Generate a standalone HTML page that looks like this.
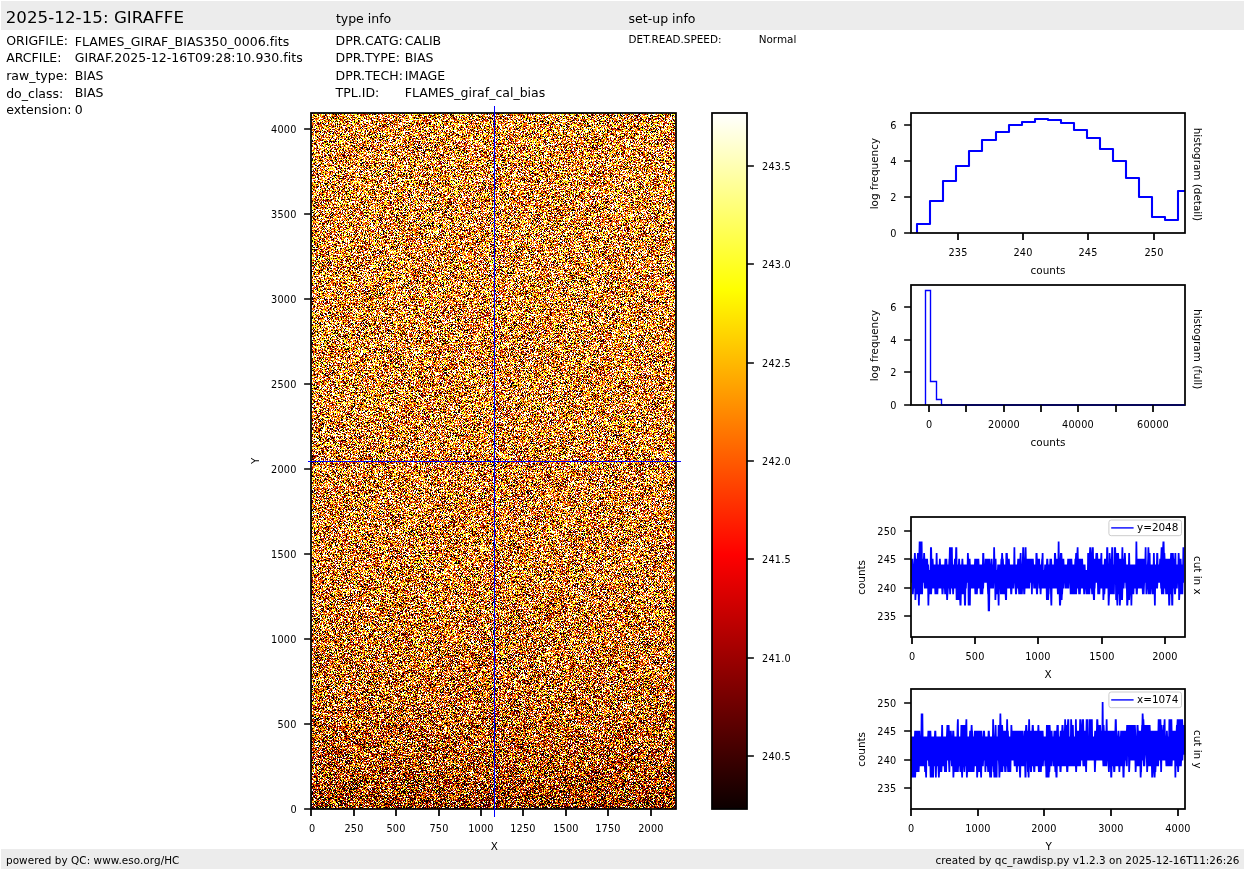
<!DOCTYPE html>
<html lang="en"><head><meta charset="utf-8"><title>2025-12-15: GIRAFFE</title>
<style>html,body{margin:0;padding:0;background:#fff;overflow:hidden}svg{display:block;will-change:transform}text{font-family:'DejaVu Sans','Liberation Sans',sans-serif;fill:#000;white-space:pre}</style></head><body>
<svg width="1245" height="870" viewBox="0 0 1245 870">
<defs>
<filter id="nz" x="0" y="0" width="1" height="1" color-interpolation-filters="sRGB">
<feTurbulence type="fractalNoise" baseFrequency="1.618" numOctaves="1" seed="3" result="t"/>
<feColorMatrix in="t" type="matrix" values="1 0 0 0 0 1 0 0 0 0 1 0 0 0 0 0 0 0 0 1" result="n"/>
<feComposite in="n" in2="SourceGraphic" operator="arithmetic" k1="0" k2="1" k3="0.25" k4="-0.125" result="c"/>
<feComponentTransfer in="c">
<feFuncR type="discrete" tableValues="0.043 0.043 0.043 0.043 0.043 0.043 0.043 0.043 0.043 0.043 0.043 0.043 0.043 0.043 0.043 0.043 0.043 0.043 0.043 0.043 0.043 0.043 0.043 0.043 0.043 0.043 0.043 0.043 0.043 0.043 0.043 0.043 0.043 0.043 0.043 0.043 0.043 0.043 0.043 0.043 0.043 0.043 0.043 0.043 0.043 0.043 0.043 0.043 0.043 0.043 0.043 0.043 0.043 0.043 0.043 0.043 0.043 0.043 0.043 0.043 0.043 0.043 0.043 0.043 0.043 0.043 0.043 0.043 0.043 0.043 0.043 0.043 0.043 0.043 0.043 0.043 0.043 0.043 0.043 0.043 0.043 0.043 0.043 0.043 0.043 0.043 0.043 0.043 0.043 0.043 0.043 0.043 0.043 0.043 0.043 0.043 0.043 0.043 0.043 0.043 0.043 0.043 0.043 0.043 0.043 0.612 0.612 0.612 0.612 0.612 0.612 0.612 0.612 0.612 0.612 0.612 0.612 0.612 0.612 0.612 1 1 1 1 1 1 1 1 1 1 1 1 1 1 1 1 1 1 1 1 1 1 1 1 1 1 1 1 1 1 1 1 1 1 1 1 1 1 1 1 1 1 1 1 1 1 1 1 1 1 1 1 1 1 1 1 1 1 1 1 1 1 1 1 1 1 1 1 1 1 1 1 1 1 1 1 1 1 1 1 1 1 1 1 1 1 1 1 1 1 1 1 1 1 1 1 1 1 1 1 1 1 1 1 1 1 1 1 1 1 1 1 1 1 1 1 1 1 1 1 1 1 1 1 1 1 1 1 1 1 1 1 1 1 1 1"/>
<feFuncG type="discrete" tableValues="0 0 0 0 0 0 0 0 0 0 0 0 0 0 0 0 0 0 0 0 0 0 0 0 0 0 0 0 0 0 0 0 0 0 0 0 0 0 0 0 0 0 0 0 0 0 0 0 0 0 0 0 0 0 0 0 0 0 0 0 0 0 0 0 0 0 0 0 0 0 0 0 0 0 0 0 0 0 0 0 0 0 0 0 0 0 0 0 0 0 0 0 0 0 0 0 0 0 0 0 0 0 0 0 0 0 0 0 0 0 0 0 0 0 0 0 0 0 0 0 0.353 0.353 0.353 0.353 0.353 0.353 0.353 0.353 0.353 0.353 0.353 0.353 0.353 0.353 0.353 0.353 1 1 1 1 1 1 1 1 1 1 1 1 1 1 1 1 1 1 1 1 1 1 1 1 1 1 1 1 1 1 1 1 1 1 1 1 1 1 1 1 1 1 1 1 1 1 1 1 1 1 1 1 1 1 1 1 1 1 1 1 1 1 1 1 1 1 1 1 1 1 1 1 1 1 1 1 1 1 1 1 1 1 1 1 1 1 1 1 1 1 1 1 1 1 1 1 1 1 1 1 1 1 1 1 1 1 1 1 1 1 1 1 1 1 1 1 1 1 1 1"/>
<feFuncB type="discrete" tableValues="0 0 0 0 0 0 0 0 0 0 0 0 0 0 0 0 0 0 0 0 0 0 0 0 0 0 0 0 0 0 0 0 0 0 0 0 0 0 0 0 0 0 0 0 0 0 0 0 0 0 0 0 0 0 0 0 0 0 0 0 0 0 0 0 0 0 0 0 0 0 0 0 0 0 0 0 0 0 0 0 0 0 0 0 0 0 0 0 0 0 0 0 0 0 0 0 0 0 0 0 0 0 0 0 0 0 0 0 0 0 0 0 0 0 0 0 0 0 0 0 0 0 0 0 0 0 0 0 0 0 0 0 0 0 0 0 0.145 0.145 0.145 0.145 0.145 0.145 0.145 0.145 0.145 0.145 0.145 0.145 0.145 0.145 0.145 0.145 1 1 1 1 1 1 1 1 1 1 1 1 1 1 1 1 1 1 1 1 1 1 1 1 1 1 1 1 1 1 1 1 1 1 1 1 1 1 1 1 1 1 1 1 1 1 1 1 1 1 1 1 1 1 1 1 1 1 1 1 1 1 1 1 1 1 1 1 1 1 1 1 1 1 1 1 1 1 1 1 1 1 1 1 1 1 1 1 1 1 1 1 1 1 1 1 1 1 1 1 1 1 1 1"/>
</feComponentTransfer></filter>
<linearGradient id="gm" x1="0" y1="0" x2="0" y2="1">
<stop offset="0" stop-color="rgb(156,156,156)"/>
<stop offset="0.3" stop-color="rgb(152,152,152)"/>
<stop offset="0.67" stop-color="rgb(143,143,143)"/>
<stop offset="0.843" stop-color="rgb(128,128,128)"/>
<stop offset="0.93" stop-color="rgb(108,108,108)"/>
<stop offset="0.965" stop-color="rgb(96,96,96)"/>
<stop offset="1" stop-color="rgb(73,73,73)"/>
</linearGradient>
<linearGradient id="avg" x1="0" y1="0" x2="0" y2="1"><stop offset="0" stop-color="rgb(202,137,71)"/><stop offset="0.7" stop-color="rgb(189,120,59)"/><stop offset="0.95" stop-color="rgb(158,84,37)"/><stop offset="1" stop-color="rgb(145,72,30)"/></linearGradient>
<linearGradient id="hot" x1="0" y1="1" x2="0" y2="0">
<stop offset="0" stop-color="rgb(11,0,0)"/><stop offset="0.365079" stop-color="rgb(255,0,0)"/><stop offset="0.746032" stop-color="rgb(255,255,0)"/><stop offset="1" stop-color="rgb(255,255,255)"/>
</linearGradient>
</defs>
<rect x="1" y="1" width="1243" height="29" fill="#ececec"/>
<rect x="1" y="849" width="1243" height="20" fill="#ececec"/>
<text x="5.70" y="22.90" font-size="16.67" letter-spacing="0.044">2025-12-15: GIRAFFE</text>
<text x="335.90" y="23.00" font-size="12.50">type info</text>
<text x="628.60" y="23.00" font-size="12.50">set-up info</text>
<text x="6.20" y="45.00" font-size="12.50">ORIGFILE:</text>
<text x="74.70" y="46.00" font-size="12.50" letter-spacing="0.04">FLAMES_GIRAF_BIAS350_0006.fits</text>
<text x="6.20" y="62.00" font-size="12.50">ARCFILE:</text>
<text x="74.70" y="62.00" font-size="12.50" letter-spacing="0.04">GIRAF.2025-12-16T09:28:10.930.fits</text>
<text x="6.20" y="80.00" font-size="12.50">raw_type:</text>
<text x="74.70" y="80.00" font-size="12.50">BIAS</text>
<text x="6.20" y="98.00" font-size="12.50">do_class:</text>
<text x="74.70" y="97.00" font-size="12.50">BIAS</text>
<text x="6.20" y="114.00" font-size="12.50">extension:</text>
<text x="74.70" y="114.00" font-size="12.50">0</text>
<text x="335.60" y="44.60" font-size="12.50">DPR.CATG:</text>
<text x="404.70" y="44.60" font-size="12.50">CALIB</text>
<text x="335.60" y="61.55" font-size="12.50">DPR.TYPE:</text>
<text x="404.70" y="61.55" font-size="12.50">BIAS</text>
<text x="335.60" y="79.55" font-size="12.50">DPR.TECH:</text>
<text x="404.70" y="79.55" font-size="12.50">IMAGE</text>
<text x="335.60" y="96.90" font-size="12.50">TPL.ID:</text>
<text x="404.70" y="97.40" font-size="12.50">FLAMES_giraf_cal_bias</text>
<text x="628.60" y="43.00" font-size="10.42">DET.READ.SPEED:</text>
<text x="758.70" y="43.00" font-size="10.42">Normal</text>
<text x="6.00" y="864.00" font-size="10.42" letter-spacing="0.068">powered by QC: www.eso.org/HC</text>
<text x="1239.50" y="864.00" font-size="10.42" text-anchor="end" letter-spacing="0.03">created by qc_rawdisp.py v1.2.3 on 2025-12-16T11:26:26</text>
<rect x="311" y="113" width="365" height="696" fill="url(#avg)"/>
<rect x="311" y="113" width="365" height="696" fill="url(#gm)" filter="url(#nz)"/>
<rect x="311" y="113" width="365" height="696" fill="none" stroke="#000" stroke-width="1.736"/>
<path d="M311.00 809v6.9M354.00 809v6.9M396.00 809v6.9M439.00 809v6.9M481.00 809v6.9M523.00 809v6.9M566.00 809v6.9M608.00 809v6.9M651.00 809v6.9" stroke="#000" stroke-width="1.736" fill="none"/>
<text x="312.00" y="831.50" font-size="9.72" text-anchor="middle">0</text>
<text x="354.00" y="831.50" font-size="9.72" text-anchor="middle" letter-spacing="0.2">250</text>
<text x="396.00" y="831.50" font-size="9.72" text-anchor="middle" letter-spacing="0.2">500</text>
<text x="439.00" y="831.50" font-size="9.72" text-anchor="middle" letter-spacing="0.2">750</text>
<text x="481.00" y="831.50" font-size="9.72" text-anchor="middle" letter-spacing="0.2">1000</text>
<text x="523.00" y="831.50" font-size="9.72" text-anchor="middle" letter-spacing="0.2">1250</text>
<text x="566.00" y="831.50" font-size="9.72" text-anchor="middle" letter-spacing="0.2">1500</text>
<text x="608.00" y="831.50" font-size="9.72" text-anchor="middle" letter-spacing="0.2">1750</text>
<text x="651.00" y="831.50" font-size="9.72" text-anchor="middle" letter-spacing="0.2">2000</text>
<path d="M311 809.00h-6.9M311 724.00h-6.9M311 639.00h-6.9M311 554.00h-6.9M311 469.00h-6.9M311 384.00h-6.9M311 299.00h-6.9M311 214.00h-6.9M311 129.00h-6.9" stroke="#000" stroke-width="1.736" fill="none"/>
<text x="296.60" y="812.55" font-size="9.72" text-anchor="end">0</text>
<text x="296.60" y="727.55" font-size="9.72" text-anchor="end" letter-spacing="0.2">500</text>
<text x="296.60" y="642.55" font-size="9.72" text-anchor="end" letter-spacing="0.2">1000</text>
<text x="296.60" y="557.55" font-size="9.72" text-anchor="end" letter-spacing="0.2">1500</text>
<text x="296.60" y="472.55" font-size="9.72" text-anchor="end" letter-spacing="0.2">2000</text>
<text x="296.60" y="387.55" font-size="9.72" text-anchor="end" letter-spacing="0.2">2500</text>
<text x="296.60" y="302.55" font-size="9.72" text-anchor="end" letter-spacing="0.2">3000</text>
<text x="296.60" y="217.55" font-size="9.72" text-anchor="end" letter-spacing="0.2">3500</text>
<text x="296.60" y="132.55" font-size="9.72" text-anchor="end" letter-spacing="0.2">4000</text>
<text x="494.20" y="850.40" font-size="10.42" text-anchor="middle">X</text>
<text x="0" y="0" transform="translate(259.00 460.90) rotate(-90)" font-size="10.42" text-anchor="middle">Y</text>
<path d="M308 461.5H681M494.5 106V817" stroke="#0000ff" stroke-width="1" fill="none"/>
<rect x="712" y="113" width="35" height="696" fill="url(#hot)"/>
<rect x="712" y="113" width="35" height="696" fill="none" stroke="#000" stroke-width="1.736"/>
<path d="M747 166.00h6.9M747 264.00h6.9M747 363.00h6.9M747 461.00h6.9M747 559.00h6.9M747 658.00h6.9M747 756.00h6.9" stroke="#000" stroke-width="1.736" fill="none"/>
<text x="762.00" y="169.55" font-size="9.72" letter-spacing="0.2">243.5</text>
<text x="762.00" y="267.55" font-size="9.72" letter-spacing="0.2">243.0</text>
<text x="762.00" y="366.55" font-size="9.72" letter-spacing="0.2">242.5</text>
<text x="762.00" y="464.55" font-size="9.72" letter-spacing="0.2">242.0</text>
<text x="762.00" y="562.55" font-size="9.72" letter-spacing="0.2">241.5</text>
<text x="762.00" y="661.55" font-size="9.72" letter-spacing="0.2">241.0</text>
<text x="762.00" y="759.55" font-size="9.72" letter-spacing="0.2">240.5</text>
<path d="M917 233V224H930V201H943V181H956V166H969V151H982V140H996V132H1009V125H1022V122H1035V119H1048V120H1061V123H1074V130H1087V138H1100V149H1113V161H1126V178H1139V197H1152V217H1165V220H1178V191H1185" stroke="#0000ff" stroke-width="2.083" fill="none" stroke-linejoin="round"/>
<rect x="911" y="113" width="274" height="120" fill="none" stroke="#000" stroke-width="1.736"/>
<path d="M958.00 233v6.9M1023.00 233v6.9M1088.00 233v6.9M1154.00 233v6.9" stroke="#000" stroke-width="1.736" fill="none"/>
<text x="958.00" y="255.60" font-size="9.72" text-anchor="middle" letter-spacing="0.2">235</text>
<text x="1023.00" y="255.60" font-size="9.72" text-anchor="middle" letter-spacing="0.2">240</text>
<text x="1088.00" y="255.60" font-size="9.72" text-anchor="middle" letter-spacing="0.2">245</text>
<text x="1154.00" y="255.60" font-size="9.72" text-anchor="middle" letter-spacing="0.2">250</text>
<path d="M911 233.00h-6.9M911 197.00h-6.9M911 161.00h-6.9M911 125.00h-6.9" stroke="#000" stroke-width="1.736" fill="none"/>
<text x="896.50" y="236.55" font-size="9.72" text-anchor="end">0</text>
<text x="896.50" y="200.55" font-size="9.72" text-anchor="end">2</text>
<text x="896.50" y="164.55" font-size="9.72" text-anchor="end">4</text>
<text x="896.50" y="128.55" font-size="9.72" text-anchor="end">6</text>
<text x="1048.00" y="274.00" font-size="10.42" text-anchor="middle">counts</text>
<text x="0" y="0" transform="translate(878.00 173.60) rotate(-90)" font-size="10.42" text-anchor="middle">log frequency</text>
<text x="0" y="0" transform="translate(1193.70 174.40) rotate(90)" font-size="10.42" text-anchor="middle">histogram (detail)</text>
<path d="M925.5 405V290.5H930.5V381.5H936.5V399.5H941.5V405H1185" stroke="#0000ff" stroke-width="1.389" fill="none"/>
<rect x="911" y="285" width="274" height="120" fill="none" stroke="#000" stroke-width="1.736"/>
<path d="M941.5 405H1185" stroke="#0000ff" stroke-width="1.389" fill="none" opacity="0.35"/>
<path d="M929.00 405v6.9M966.00 405v6.9M1004.00 405v6.9M1041.00 405v6.9M1078.00 405v6.9M1116.00 405v6.9M1153.00 405v6.9" stroke="#000" stroke-width="1.736" fill="none"/>
<text x="929.00" y="427.60" font-size="9.72" text-anchor="middle">0</text>
<text x="1004.00" y="427.60" font-size="9.72" text-anchor="middle" letter-spacing="0.2">20000</text>
<text x="1078.00" y="427.60" font-size="9.72" text-anchor="middle" letter-spacing="0.2">40000</text>
<text x="1153.00" y="427.60" font-size="9.72" text-anchor="middle" letter-spacing="0.2">60000</text>
<path d="M911 405.00h-6.9M911 372.00h-6.9M911 340.00h-6.9M911 307.00h-6.9" stroke="#000" stroke-width="1.736" fill="none"/>
<text x="896.50" y="408.55" font-size="9.72" text-anchor="end">0</text>
<text x="896.50" y="375.55" font-size="9.72" text-anchor="end">2</text>
<text x="896.50" y="343.55" font-size="9.72" text-anchor="end">4</text>
<text x="896.50" y="310.55" font-size="9.72" text-anchor="end">6</text>
<text x="1048.00" y="446.00" font-size="10.42" text-anchor="middle">counts</text>
<text x="0" y="0" transform="translate(878.00 345.60) rotate(-90)" font-size="10.42" text-anchor="middle">log frequency</text>
<text x="0" y="0" transform="translate(1193.70 349.20) rotate(90)" font-size="10.42" text-anchor="middle">histogram (full)</text>
<clipPath id="c3"><rect x="911" y="517" width="274" height="120"/></clipPath>
<path d="M911.00 558.7L913.00 558.7L913.25 564.4L913.50 558.7L913.75 558.7L914.00 552.9L915.75 552.9L916.00 558.7L916.75 558.7L917.00 552.9L918.50 552.9L918.75 541.5L922.50 541.5L922.75 558.7L923.00 558.7L923.25 552.9L925.00 552.9L925.25 558.7L928.00 558.7L928.25 564.4L929.00 564.4L929.25 570.1L929.75 570.1L930.00 547.2L932.00 547.2L932.25 558.7L933.50 558.7L933.75 564.4L935.50 564.4L935.75 552.9L937.50 552.9L937.75 564.4L938.75 564.4L939.00 558.7L940.75 558.7L941.00 564.4L944.25 564.4L944.50 558.7L947.25 558.7L947.50 564.4L948.25 564.4L948.50 558.7L948.75 558.7L949.00 547.2L952.75 547.2L953.00 564.4L953.75 564.4L954.00 558.7L955.00 558.7L955.25 547.2L957.25 547.2L957.50 564.4L958.00 564.4L958.25 558.7L960.00 558.7L960.25 564.4L961.25 564.4L961.50 558.7L963.25 558.7L963.50 564.4L966.75 564.4L967.00 552.9L968.75 552.9L969.00 558.7L970.50 558.7L970.75 564.4L974.00 564.4L974.25 558.7L979.25 558.7L979.50 564.4L982.00 564.4L982.25 552.9L984.25 552.9L984.50 564.4L984.75 558.7L990.00 558.7L990.25 564.4L990.50 558.7L992.50 558.7L992.75 564.4L993.00 564.4L993.25 547.2L995.00 547.2L995.25 558.7L996.50 558.7L996.75 570.1L997.00 570.1L997.25 564.4L1000.25 564.4L1000.50 558.7L1001.00 558.7L1001.25 552.9L1003.00 552.9L1003.25 558.7L1003.75 558.7L1004.00 564.4L1005.25 564.4L1005.50 552.9L1007.75 552.9L1008.00 558.7L1009.75 558.7L1010.00 564.4L1013.25 564.4L1013.50 547.2L1015.25 547.2L1015.50 564.4L1017.00 564.4L1017.25 558.7L1019.50 558.7L1019.75 552.9L1021.50 552.9L1021.75 564.4L1022.00 558.7L1022.25 547.2L1024.25 547.2L1024.50 558.7L1024.75 547.2L1026.50 547.2L1026.75 558.7L1033.75 558.7L1034.00 564.4L1035.25 564.4L1035.50 552.9L1037.50 552.9L1037.75 558.7L1040.00 558.7L1040.25 564.4L1041.00 564.4L1041.25 558.7L1041.50 558.7L1041.75 552.9L1043.50 552.9L1043.75 570.1L1044.00 570.1L1044.25 564.4L1046.00 564.4L1046.25 558.7L1048.25 558.7L1048.50 564.4L1049.25 564.4L1049.50 558.7L1052.00 558.7L1052.25 564.4L1053.75 564.4L1054.00 552.9L1056.00 552.9L1056.25 558.7L1057.50 558.7L1057.75 541.5L1059.50 541.5L1059.75 558.7L1060.00 552.9L1062.25 552.9L1062.50 558.7L1064.25 558.7L1064.50 564.4L1067.00 564.4L1067.25 558.7L1072.25 558.7L1072.50 564.4L1074.25 564.4L1074.50 558.7L1075.00 558.7L1075.25 552.9L1076.50 552.9L1076.75 547.2L1078.50 547.2L1078.75 558.7L1083.00 558.7L1083.25 564.4L1085.50 564.4L1085.75 570.1L1087.00 570.1L1087.25 552.9L1089.00 552.9L1089.25 547.2L1091.25 547.2L1091.50 552.9L1091.75 547.2L1093.75 547.2L1094.00 558.7L1095.25 558.7L1095.50 552.9L1098.00 552.9L1098.25 558.7L1100.25 558.7L1100.50 552.9L1102.25 552.9L1102.50 564.4L1103.75 564.4L1104.00 558.7L1106.00 558.7L1106.25 547.2L1108.25 547.2L1108.50 564.4L1108.75 552.9L1110.50 552.9L1110.75 558.7L1111.00 558.7L1111.25 547.2L1113.25 547.2L1113.50 564.4L1113.75 564.4L1114.00 547.2L1116.00 547.2L1116.25 552.9L1119.00 552.9L1119.25 558.7L1121.25 558.7L1121.50 547.2L1123.25 547.2L1123.50 558.7L1123.75 558.7L1124.00 552.9L1125.75 552.9L1126.00 558.7L1126.25 564.4L1128.00 564.4L1128.25 552.9L1130.00 552.9L1130.25 564.4L1135.25 564.4L1135.50 541.5L1137.25 541.5L1137.50 558.7L1144.50 558.7L1144.75 547.2L1146.50 547.2L1146.75 564.4L1147.00 564.4L1147.25 558.7L1147.50 547.2L1149.25 547.2L1149.50 552.9L1150.50 552.9L1150.75 564.4L1152.75 564.4L1153.00 552.9L1154.75 552.9L1155.00 564.4L1156.00 564.4L1156.25 552.9L1158.25 552.9L1158.50 564.4L1159.00 564.4L1159.25 558.7L1160.25 558.7L1160.50 552.9L1160.75 547.2L1162.25 547.2L1162.50 541.5L1164.50 541.5L1164.75 552.9L1165.25 552.9L1165.50 558.7L1170.00 558.7L1170.25 552.9L1173.75 552.9L1174.00 558.7L1174.25 558.7L1174.50 552.9L1176.25 552.9L1176.50 564.4L1177.50 564.4L1177.75 552.9L1179.50 552.9L1179.75 558.7L1181.50 558.7L1181.75 564.4L1182.25 564.4L1182.50 547.2L1184.25 547.2L1184.25 577.1L1184.00 582.8L1183.50 582.8L1183.25 594.2L1180.25 594.2L1180.00 599.9L1178.25 599.9L1178.00 582.8L1177.75 588.5L1176.25 588.5L1176.00 594.2L1174.00 594.2L1173.75 588.5L1173.50 588.5L1173.25 605.6L1171.25 605.6L1171.00 594.2L1170.50 594.2L1170.25 605.6L1168.25 605.6L1168.00 594.2L1165.25 594.2L1165.00 588.5L1164.50 588.5L1164.25 594.2L1161.00 594.2L1160.75 588.5L1160.25 588.5L1160.00 582.8L1158.25 582.8L1158.00 588.5L1156.00 588.5L1155.75 605.6L1154.00 605.6L1153.75 594.2L1152.00 594.2L1151.75 588.5L1151.50 594.2L1147.75 594.2L1147.50 588.5L1147.25 594.2L1145.50 594.2L1145.25 582.8L1145.00 582.8L1144.75 588.5L1144.50 594.2L1142.00 594.2L1141.75 588.5L1138.00 588.5L1137.75 594.2L1135.75 594.2L1135.50 588.5L1134.50 588.5L1134.25 594.2L1132.50 594.2L1132.25 605.6L1130.50 605.6L1130.25 594.2L1130.00 599.9L1128.50 599.9L1128.25 605.6L1126.25 605.6L1126.00 588.5L1125.50 588.5L1125.25 582.8L1124.75 582.8L1124.50 588.5L1123.25 588.5L1123.00 599.9L1121.00 599.9L1120.75 605.6L1119.00 605.6L1118.75 594.2L1118.50 594.2L1118.25 605.6L1116.50 605.6L1116.25 599.9L1115.25 599.9L1115.00 582.8L1114.75 594.2L1110.00 594.2L1109.75 599.9L1109.50 605.6L1107.75 605.6L1107.50 588.5L1105.50 588.5L1105.25 594.2L1104.50 594.2L1104.25 599.9L1102.50 599.9L1102.25 588.5L1100.50 588.5L1100.25 594.2L1097.25 594.2L1097.00 582.8L1095.75 582.8L1095.50 588.5L1095.25 588.5L1095.00 599.9L1093.00 599.9L1092.75 594.2L1091.25 594.2L1091.00 588.5L1090.50 588.5L1090.25 594.2L1085.75 594.2L1085.50 588.5L1085.25 594.2L1083.25 594.2L1083.00 588.5L1081.00 588.5L1080.75 594.2L1078.25 594.2L1078.00 588.5L1077.25 588.5L1077.00 594.2L1069.75 594.2L1069.50 582.8L1069.25 588.5L1065.00 588.5L1064.75 582.8L1064.50 588.5L1063.25 588.5L1063.00 594.2L1062.75 594.2L1062.50 599.9L1061.25 599.9L1061.00 605.6L1059.00 605.6L1058.75 594.2L1057.00 594.2L1056.75 588.5L1052.50 588.5L1052.25 605.6L1050.50 605.6L1050.25 599.9L1050.00 588.5L1049.75 588.5L1049.50 594.2L1049.25 594.2L1049.00 599.9L1046.00 599.9L1045.75 588.5L1041.75 588.5L1041.50 594.2L1039.75 594.2L1039.50 588.5L1038.50 588.5L1038.25 582.8L1038.00 594.2L1036.00 594.2L1035.75 588.5L1033.25 588.5L1033.00 582.8L1032.75 594.2L1031.00 594.2L1030.75 582.8L1030.25 582.8L1030.00 588.5L1025.50 588.5L1025.25 594.2L1023.25 594.2L1023.00 588.5L1022.75 594.2L1018.25 594.2L1018.00 588.5L1017.25 588.5L1017.00 594.2L1015.00 594.2L1014.75 588.5L1014.50 582.8L1014.25 588.5L1012.50 588.5L1012.25 594.2L1010.25 594.2L1010.00 588.5L1007.25 588.5L1007.00 599.9L1005.00 599.9L1004.75 594.2L1000.00 594.2L999.75 588.5L999.50 605.6L997.75 605.6L997.50 594.2L996.50 594.2L996.25 599.9L994.50 599.9L994.25 582.8L994.00 588.5L990.25 588.5L990.00 611.3L987.75 611.3L987.50 594.2L987.25 594.2L987.00 588.5L986.75 582.8L984.25 582.8L984.00 588.5L983.50 588.5L983.25 594.2L979.75 594.2L979.50 588.5L978.00 588.5L977.75 594.2L974.50 594.2L974.25 588.5L971.00 588.5L970.75 605.6L967.75 605.6L967.50 582.8L967.00 582.8L966.75 588.5L966.25 588.5L966.00 605.6L964.00 605.6L963.75 594.2L961.75 594.2L961.50 605.6L959.50 605.6L959.25 599.9L955.75 599.9L955.50 588.5L954.25 588.5L954.00 594.2L952.25 594.2L952.00 588.5L951.25 588.5L951.00 594.2L949.25 594.2L949.00 588.5L948.75 588.5L948.50 594.2L948.25 594.2L948.00 599.9L946.25 599.9L946.00 594.2L944.25 594.2L944.00 588.5L943.75 588.5L943.50 594.2L941.50 594.2L941.25 588.5L938.50 588.5L938.25 594.2L934.50 594.2L934.25 588.5L932.25 588.5L932.00 594.2L929.50 594.2L929.25 605.6L927.50 605.6L927.25 588.5L924.00 588.5L923.75 582.8L923.25 582.8L923.00 594.2L920.00 594.2L919.75 605.6L918.00 605.6L917.75 594.2L916.50 594.2L916.25 599.9L914.50 599.9L914.25 588.5L914.00 588.5L913.75 594.2L912.00 594.2L911.75 582.8L911.25 582.8L911.00 559.9Z" fill="#0000ff" clip-path="url(#c3)"/>
<rect x="911" y="517" width="274" height="120" fill="none" stroke="#000" stroke-width="1.736"/>
<path d="M912.00 637v6.9M975.00 637v6.9M1038.00 637v6.9M1102.00 637v6.9M1165.00 637v6.9" stroke="#000" stroke-width="1.736" fill="none"/>
<text x="912.00" y="659.60" font-size="9.72" text-anchor="middle">0</text>
<text x="975.00" y="659.60" font-size="9.72" text-anchor="middle" letter-spacing="0.2">500</text>
<text x="1038.00" y="659.60" font-size="9.72" text-anchor="middle" letter-spacing="0.2">1000</text>
<text x="1102.00" y="659.60" font-size="9.72" text-anchor="middle" letter-spacing="0.2">1500</text>
<text x="1165.00" y="659.60" font-size="9.72" text-anchor="middle" letter-spacing="0.2">2000</text>
<path d="M911 616.00h-6.9M911 588.00h-6.9M911 559.00h-6.9M911 531.00h-6.9" stroke="#000" stroke-width="1.736" fill="none"/>
<text x="896.50" y="619.55" font-size="9.72" text-anchor="end" letter-spacing="0.2">235</text>
<text x="896.50" y="591.55" font-size="9.72" text-anchor="end" letter-spacing="0.2">240</text>
<text x="896.50" y="562.55" font-size="9.72" text-anchor="end" letter-spacing="0.2">245</text>
<text x="896.50" y="534.55" font-size="9.72" text-anchor="end" letter-spacing="0.2">250</text>
<text x="1048.00" y="678.00" font-size="10.42" text-anchor="middle">X</text>
<text x="0" y="0" transform="translate(865.00 577.40) rotate(-90)" font-size="10.42" text-anchor="middle">counts</text>
<text x="0" y="0" transform="translate(1193.70 575.30) rotate(90)" font-size="10.42" text-anchor="middle">cut in x</text>
<rect x="1108.9" y="520.0" width="72.6" height="15.7" rx="2.3" ry="2.3" fill="#fff" fill-opacity="0.8" stroke="#ccc" stroke-width="1.0"/>
<path d="M1111.9 527.9H1132.9" stroke="#0000ff" stroke-width="1.389" stroke-linecap="square"/>
<text x="1137.00" y="530.80" font-size="10.42">y=2048</text>
<clipPath id="c4"><rect x="911" y="689" width="274" height="120"/></clipPath>
<path d="M910.00 736.4L914.00 736.4L914.25 730.7L920.25 730.7L920.50 736.4L920.75 713.5L923.25 713.5L923.50 736.4L927.25 736.4L927.50 730.7L931.25 730.7L931.50 736.4L934.00 736.4L934.25 730.7L936.25 730.7L936.50 736.4L941.00 736.4L941.25 724.9L943.00 724.9L943.25 736.4L946.00 736.4L946.25 730.7L946.50 724.9L949.50 724.9L949.75 730.7L951.75 730.7L952.00 736.4L952.25 730.7L954.25 730.7L954.50 736.4L956.50 736.4L956.75 724.9L957.00 719.2L958.75 719.2L959.00 736.4L960.25 736.4L960.50 724.9L965.25 724.9L965.50 719.2L967.25 719.2L967.50 736.4L969.00 736.4L969.25 730.7L970.50 730.7L970.75 724.9L972.50 724.9L972.75 730.7L973.00 730.7L973.25 736.4L973.75 736.4L974.00 730.7L982.25 730.7L982.50 736.4L982.75 736.4L983.00 730.7L985.00 730.7L985.25 736.4L987.50 736.4L987.75 730.7L989.75 730.7L990.00 736.4L992.00 736.4L992.25 719.2L994.00 719.2L994.25 730.7L994.50 736.4L994.75 724.9L996.50 724.9L996.75 736.4L997.50 736.4L997.75 724.9L999.25 724.9L999.50 713.5L1001.25 713.5L1001.50 724.9L1003.00 724.9L1003.25 730.7L1006.00 730.7L1006.25 719.2L1008.00 719.2L1008.25 730.7L1008.75 730.7L1009.00 736.4L1010.25 736.4L1010.50 724.9L1012.25 724.9L1012.50 730.7L1023.25 730.7L1023.50 736.4L1023.75 730.7L1025.00 730.7L1025.25 724.9L1027.25 724.9L1027.50 730.7L1028.00 730.7L1028.25 719.2L1030.00 719.2L1030.25 730.7L1031.50 730.7L1031.75 724.9L1033.75 724.9L1034.00 730.7L1037.25 730.7L1037.50 724.9L1039.25 724.9L1039.50 730.7L1043.50 730.7L1043.75 736.4L1045.75 736.4L1046.00 724.9L1050.50 724.9L1050.75 730.7L1052.50 730.7L1052.75 736.4L1053.25 736.4L1053.50 730.7L1056.25 730.7L1056.50 724.9L1058.75 724.9L1059.00 736.4L1059.50 736.4L1059.75 730.7L1061.25 730.7L1061.50 724.9L1063.50 724.9L1063.75 730.7L1064.00 730.7L1064.25 719.2L1066.00 719.2L1066.25 724.9L1067.00 724.9L1067.25 719.2L1069.25 719.2L1069.50 736.4L1070.00 736.4L1070.25 719.2L1072.00 719.2L1072.25 724.9L1073.75 724.9L1074.00 736.4L1074.75 736.4L1075.00 719.2L1076.75 719.2L1077.00 730.7L1079.00 730.7L1079.25 719.2L1081.50 719.2L1081.75 724.9L1082.00 719.2L1084.00 719.2L1084.25 730.7L1085.50 730.7L1085.75 719.2L1088.50 719.2L1088.75 736.4L1089.00 719.2L1092.75 719.2L1093.00 736.4L1094.00 736.4L1094.25 730.7L1096.00 730.7L1096.25 719.2L1098.25 719.2L1098.50 724.9L1101.00 724.9L1101.25 730.7L1101.50 730.7L1101.75 702.1L1103.50 702.1L1103.75 724.9L1104.50 724.9L1104.75 730.7L1105.50 730.7L1105.75 719.2L1107.50 719.2L1107.75 730.7L1114.50 730.7L1114.75 719.2L1116.75 719.2L1117.00 730.7L1117.25 736.4L1117.50 730.7L1119.50 730.7L1119.75 736.4L1120.00 736.4L1120.25 730.7L1126.00 730.7L1126.25 724.9L1135.75 724.9L1136.00 730.7L1136.25 736.4L1136.50 724.9L1138.50 724.9L1138.75 730.7L1141.00 730.7L1141.25 724.9L1141.50 724.9L1141.75 713.5L1143.50 713.5L1143.75 719.2L1144.25 719.2L1144.50 724.9L1150.50 724.9L1150.75 730.7L1157.50 730.7L1157.75 719.2L1161.25 719.2L1161.50 724.9L1162.25 724.9L1162.50 730.7L1162.75 724.9L1163.50 724.9L1163.75 719.2L1165.50 719.2L1165.75 736.4L1166.00 730.7L1167.75 730.7L1168.00 736.4L1168.25 736.4L1168.50 719.2L1172.25 719.2L1172.50 730.7L1175.75 730.7L1176.00 724.9L1176.50 724.9L1176.75 719.2L1183.00 719.2L1183.25 724.9L1184.75 724.9L1185.00 736.4L1185.25 742.1L1185.25 743.3L1185.00 749.1L1184.75 754.8L1183.50 754.8L1183.25 760.5L1182.00 760.5L1181.75 766.2L1179.25 766.2L1179.00 771.9L1177.25 771.9L1177.00 766.2L1176.50 766.2L1176.25 777.6L1174.50 777.6L1174.25 760.5L1172.75 760.5L1172.50 766.2L1165.50 766.2L1165.25 760.5L1162.25 760.5L1162.00 771.9L1160.25 771.9L1160.00 760.5L1159.25 760.5L1159.00 766.2L1156.50 766.2L1156.25 771.9L1155.75 771.9L1155.50 777.6L1153.75 777.6L1153.50 771.9L1153.25 777.6L1151.25 777.6L1151.00 766.2L1148.25 766.2L1148.00 771.9L1146.25 771.9L1146.00 760.5L1145.75 754.8L1145.50 760.5L1145.25 766.2L1143.00 766.2L1142.75 760.5L1142.25 760.5L1142.00 771.9L1141.75 771.9L1141.50 777.6L1139.75 777.6L1139.50 766.2L1136.75 766.2L1136.50 771.9L1134.75 771.9L1134.50 760.5L1130.50 760.5L1130.25 766.2L1130.00 771.9L1128.25 771.9L1128.00 754.8L1127.75 766.2L1126.00 766.2L1125.75 760.5L1125.50 760.5L1125.25 766.2L1124.75 766.2L1124.50 777.6L1122.50 777.6L1122.25 766.2L1120.50 766.2L1120.25 771.9L1118.50 771.9L1118.25 766.2L1115.50 766.2L1115.25 771.9L1113.25 771.9L1113.00 766.2L1112.50 766.2L1112.25 777.6L1110.25 777.6L1110.00 766.2L1109.75 771.9L1108.00 771.9L1107.75 766.2L1107.50 760.5L1107.25 766.2L1102.50 766.2L1102.25 760.5L1096.25 760.5L1096.00 766.2L1095.75 771.9L1094.00 771.9L1093.75 760.5L1087.25 760.5L1087.00 771.9L1085.25 771.9L1085.00 766.2L1082.50 766.2L1082.25 760.5L1081.25 760.5L1081.00 766.2L1077.25 766.2L1077.00 771.9L1075.25 771.9L1075.00 766.2L1068.50 766.2L1068.25 771.9L1066.25 771.9L1066.00 766.2L1061.75 766.2L1061.50 771.9L1059.50 771.9L1059.25 766.2L1057.75 766.2L1057.50 777.6L1055.50 777.6L1055.25 771.9L1054.50 771.9L1054.25 766.2L1052.75 766.2L1052.50 760.5L1052.25 766.2L1050.50 766.2L1050.25 771.9L1049.75 771.9L1049.50 777.6L1045.50 777.6L1045.25 766.2L1044.50 766.2L1044.25 760.5L1044.00 760.5L1043.75 766.2L1042.00 766.2L1041.75 771.9L1038.00 771.9L1037.75 766.2L1035.50 766.2L1035.25 771.9L1033.25 771.9L1033.00 766.2L1032.25 766.2L1032.00 771.9L1030.00 771.9L1029.75 766.2L1029.50 777.6L1027.75 777.6L1027.50 771.9L1027.00 771.9L1026.75 760.5L1026.50 777.6L1024.50 777.6L1024.25 766.2L1021.25 766.2L1021.00 777.6L1019.25 777.6L1019.00 771.9L1018.75 766.2L1018.00 766.2L1017.75 771.9L1016.00 771.9L1015.75 766.2L1013.75 766.2L1013.50 760.5L1011.50 760.5L1011.25 771.9L1007.25 771.9L1007.00 766.2L1006.75 766.2L1006.50 771.9L1004.25 771.9L1004.00 766.2L1003.50 766.2L1003.25 771.9L1000.50 771.9L1000.25 777.6L998.50 777.6L998.25 766.2L998.00 760.5L997.75 760.5L997.50 777.6L993.50 777.6L993.25 771.9L992.75 771.9L992.50 766.2L992.25 766.2L992.00 777.6L989.25 777.6L989.00 771.9L987.25 771.9L987.00 766.2L986.50 766.2L986.25 771.9L984.50 771.9L984.25 760.5L984.00 760.5L983.75 766.2L982.25 766.2L982.00 777.6L980.25 777.6L980.00 771.9L978.25 771.9L978.00 777.6L976.25 777.6L976.00 766.2L974.75 766.2L974.50 771.9L968.00 771.9L967.75 777.6L966.00 777.6L965.75 766.2L965.50 766.2L965.25 771.9L963.50 771.9L963.25 766.2L963.00 777.6L961.25 777.6L961.00 771.9L959.50 771.9L959.25 766.2L959.00 766.2L958.75 771.9L954.50 771.9L954.25 777.6L952.50 777.6L952.25 766.2L951.00 766.2L950.75 760.5L950.50 760.5L950.25 771.9L948.50 771.9L948.25 766.2L948.00 760.5L947.25 760.5L947.00 771.9L944.00 771.9L943.75 766.2L942.50 766.2L942.25 771.9L940.00 771.9L939.75 777.6L938.00 777.6L937.75 771.9L937.50 766.2L937.00 766.2L936.75 777.6L935.00 777.6L934.75 766.2L934.25 766.2L934.00 777.6L929.75 777.6L929.50 766.2L928.25 766.2L928.00 760.5L927.25 760.5L927.00 777.6L925.25 777.6L925.00 771.9L924.25 771.9L924.00 766.2L919.75 766.2L919.50 771.9L916.25 771.9L916.00 777.6L910.25 777.6L910.00 737.6Z" fill="#0000ff" clip-path="url(#c4)"/>
<rect x="911" y="689" width="274" height="120" fill="none" stroke="#000" stroke-width="1.736"/>
<path d="M911.00 809v6.9M978.00 809v6.9M1044.00 809v6.9M1111.00 809v6.9M1178.00 809v6.9" stroke="#000" stroke-width="1.736" fill="none"/>
<text x="911.00" y="831.60" font-size="9.72" text-anchor="middle">0</text>
<text x="978.00" y="831.60" font-size="9.72" text-anchor="middle" letter-spacing="0.2">1000</text>
<text x="1044.00" y="831.60" font-size="9.72" text-anchor="middle" letter-spacing="0.2">2000</text>
<text x="1111.00" y="831.60" font-size="9.72" text-anchor="middle" letter-spacing="0.2">3000</text>
<text x="1178.00" y="831.60" font-size="9.72" text-anchor="middle" letter-spacing="0.2">4000</text>
<path d="M911 788.00h-6.9M911 760.00h-6.9M911 731.00h-6.9M911 703.00h-6.9" stroke="#000" stroke-width="1.736" fill="none"/>
<text x="896.50" y="791.55" font-size="9.72" text-anchor="end" letter-spacing="0.2">235</text>
<text x="896.50" y="763.55" font-size="9.72" text-anchor="end" letter-spacing="0.2">240</text>
<text x="896.50" y="734.55" font-size="9.72" text-anchor="end" letter-spacing="0.2">245</text>
<text x="896.50" y="706.55" font-size="9.72" text-anchor="end" letter-spacing="0.2">250</text>
<text x="1048.70" y="850.00" font-size="10.42" text-anchor="middle">Y</text>
<text x="0" y="0" transform="translate(865.00 749.40) rotate(-90)" font-size="10.42" text-anchor="middle">counts</text>
<text x="0" y="0" transform="translate(1193.70 749.30) rotate(90)" font-size="10.42" text-anchor="middle">cut in y</text>
<rect x="1108.9" y="692.0" width="72.6" height="15.7" rx="2.3" ry="2.3" fill="#fff" fill-opacity="0.8" stroke="#ccc" stroke-width="1.0"/>
<path d="M1111.9 699.9H1132.9" stroke="#0000ff" stroke-width="1.389" stroke-linecap="square"/>
<text x="1137.00" y="702.80" font-size="10.42">x=1074</text>
</svg></body></html>
